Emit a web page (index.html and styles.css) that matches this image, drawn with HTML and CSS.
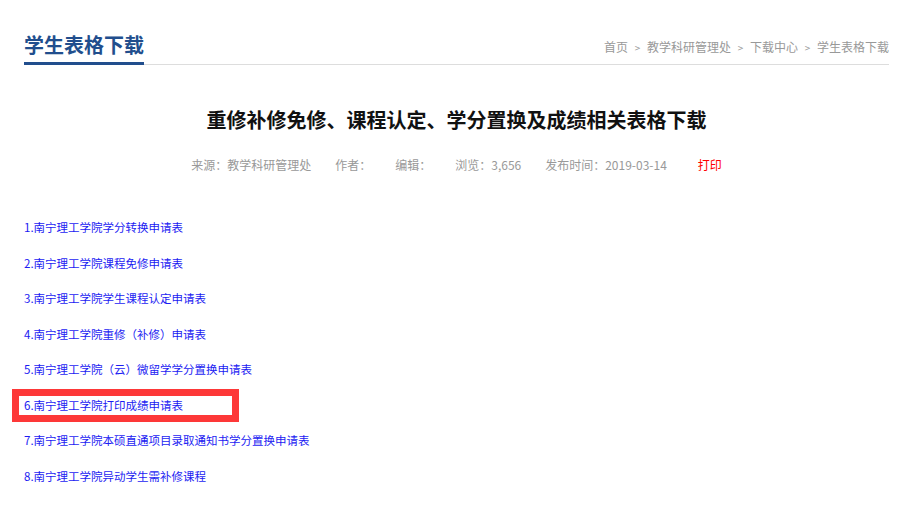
FILE: index.html
```html
<!DOCTYPE html>
<html lang="zh-CN">

<head>
    <meta charset="UTF-8">
    <meta name="viewport" content="width=device-width, initial-scale=1.0">
    <title>学生表格下载</title>
    <link rel="stylesheet" href="styles.css">
</head>

<body>
    <div class="page">
        <div class="column-head">
            <h2 class="column-title">学生表格下载</h2>
            <div class="breadcrumb">
                <a href="#">首页</a><span class="sep">&gt;</span><a href="#">教学科研管理处</a><span class="sep">&gt;</span><a href="#">下载中心</a><span class="sep">&gt;</span><a href="#">学生表格下载</a>
            </div>
        </div>

        <h1 class="article-title">重修补修免修、课程认定、学分置换及成绩相关表格下载</h1>

        <div class="article-info">
            <span>来源：教学科研管理处</span>
            <span>作者：</span>
            <span>编辑：</span>
            <span>浏览：3,656</span>
            <span>发布时间：2019-03-14</span>
            <a href="#" class="print">打印</a>
        </div>

        <ul class="file-list">
            <li><a href="#">1.南宁理工学院学分转换申请表</a></li>
            <li><a href="#">2.南宁理工学院课程免修申请表</a></li>
            <li><a href="#">3.南宁理工学院学生课程认定申请表</a></li>
            <li><a href="#">4.南宁理工学院重修（补修）申请表</a></li>
            <li><a href="#">5.南宁理工学院（云）微留学学分置换申请表</a></li>
            <li class="marked"><a href="#">6.南宁理工学院打印成绩申请表</a><span class="mark-box"></span></li>
            <li><a href="#">7.南宁理工学院本硕直通项目录取通知书学分置换申请表</a></li>
            <li><a href="#">8.南宁理工学院异动学生需补修课程</a></li>
        </ul>
    </div>
</body>

</html>
```

FILE: styles.css
```css
body {
    margin: 0;
    font-family: "Noto Sans CJK SC", "Microsoft YaHei", sans-serif;
    background: #fff;
}

a {
    text-decoration: none;
}

.page {
    padding: 30px 24px 0 24px;
}

.column-head {
    display: flex;
    justify-content: space-between;
    align-items: flex-end;
    border-bottom: 1px solid #ddd;
}

.column-title {
    margin: 0 0 -1px 0;
    font-size: 20px;
    line-height: 30px;
    font-weight: bold;
    color: #214e8d;
    padding-bottom: 2px;
    border-bottom: 3px solid #214e8d;
}

.breadcrumb {
    font-size: 12px;
    line-height: 20px;
    color: #999;
    padding-bottom: 6px;
}

.breadcrumb a {
    color: #999;
}

.breadcrumb .sep {
    display: inline-block;
    width: 19px;
    text-align: center;
    font-size: 10px;
}

.article-title {
    margin: 40px 0 0 0;
    text-align: center;
    font-size: 20px;
    line-height: 30px;
    font-weight: bold;
    color: #111;
}

.article-info {
    margin-top: 20px;
    display: flex;
    justify-content: center;
    gap: 24px;
    font-size: 12px;
    line-height: 20px;
    color: #999;
}

.article-info .print {
    color: #f00;
    margin-left: 7px;
}

.file-list {
    list-style: none;
    margin: 35px 0 0 0;
    padding: 0;
}

.file-list li {
    position: relative;
    font-size: 11.5px;
    line-height: 35.5px;
}

.file-list li a {
    color: #1c1cf2;
}

/* red annotation frame around item 6 */
.mark-box {
    position: absolute;
    left: -12px;
    top: 1px;
    width: 227px;
    height: 33px;
    box-sizing: border-box;
    border: 7px solid #fd3838;
    pointer-events: none;
}
```
